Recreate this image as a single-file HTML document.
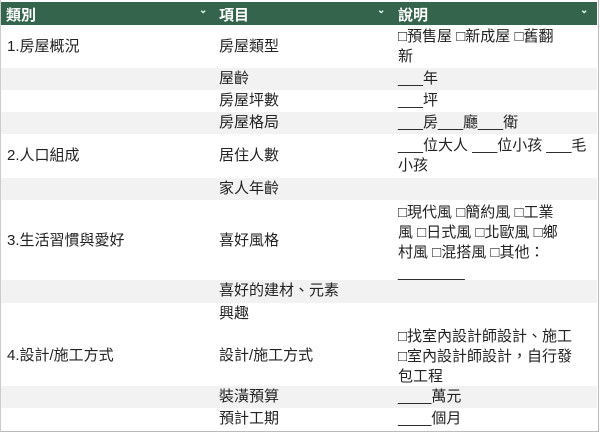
<!DOCTYPE html>
<html><head><meta charset="utf-8"><style>
body{margin:0;width:600px;height:433px;background:#fff;font-family:"Liberation Sans","Noto Sans CJK TC",sans-serif;font-size:15px;color:#222;position:relative;overflow:hidden}
.frame{position:absolute;left:0;top:0;width:597px;height:431px;border-right:1px solid #bbb;border-bottom:1px solid #bbb;border-left:1px solid #ccc}
.hdr{position:absolute;left:1px;top:2px;width:596px;height:23px;background:#34644b;color:#fff;font-weight:bold;font-size:15px}
.hdr span{position:absolute;top:2px}
.hdr i{position:absolute;top:3px;font-style:normal;font-size:10px;color:#dfe}
.r{position:absolute;left:1px;width:596px}
.g{background:#f2f2f2}
.c{position:absolute;line-height:20px;white-space:nowrap}
.a{left:6px}.b{left:218px}.d{left:397px}
</style></head><body>
<div class="frame"></div>
<div class="hdr"><span style="left:5px">類別</span><i style="left:198px">⌄</i><span style="left:218px">項目</span><i style="left:376px">⌄</i><span style="left:397px">說明</span><i style="left:579px">⌄</i></div>

<div class="r" style="top:26px;height:42px"><div class="c a" style="top:11px">1.房屋概況</div><div class="c b" style="top:11px">房屋類型</div><div class="c d" style="top:1px">□預售屋 □新成屋 □舊翻<br>新</div></div>
<div class="r g" style="top:68px;height:22px"><div class="c b" style="top:1px">屋齡</div><div class="c d" style="top:1px">___年</div></div>
<div class="r" style="top:90px;height:22px"><div class="c b" style="top:1px">房屋坪數</div><div class="c d" style="top:1px">___坪</div></div>
<div class="r g" style="top:112px;height:22px"><div class="c b" style="top:1px">房屋格局</div><div class="c d" style="top:1px">___房___廳___衛</div></div>
<div class="r" style="top:134px;height:44px"><div class="c a" style="top:12px">2.人口組成</div><div class="c b" style="top:12px">居住人數</div><div class="c d" style="top:2px">___位大人 ___位小孩 ___毛<br>小孩</div></div>
<div class="r g" style="top:178px;height:22px"><div class="c b" style="top:1px">家人年齡</div></div>
<div class="r" style="top:200px;height:80px"><div class="c a" style="top:31px">3.生活習慣與愛好</div><div class="c b" style="top:31px">喜好風格</div><div class="c d" style="top:3px">□現代風 □簡約風 □工業<br>風 □日式風 □北歐風 □鄉<br>村風 □混搭風 □其他：<br>________</div></div>
<div class="r g" style="top:280px;height:23px"><div class="c b" style="top:1px">喜好的建材、元素</div></div>
<div class="r" style="top:303px;height:23px"><div class="c b" style="top:1px">興趣</div></div>
<div class="r" style="top:326px;height:60px"><div class="c a" style="top:20px">4.設計/施工方式</div><div class="c b" style="top:20px">設計/施工方式</div><div class="c d" style="top:1px">□找室內設計師設計、施工<br>□室內設計師設計，自行發<br>包工程</div></div>
<div class="r g" style="top:386px;height:22px"><div class="c b" style="top:1px">裝潢預算</div><div class="c d" style="top:1px">____萬元</div></div>
<div class="r" style="top:408px;height:22px"><div class="c b" style="top:1px">預計工期</div><div class="c d" style="top:1px">____個月</div></div>
</body></html>
